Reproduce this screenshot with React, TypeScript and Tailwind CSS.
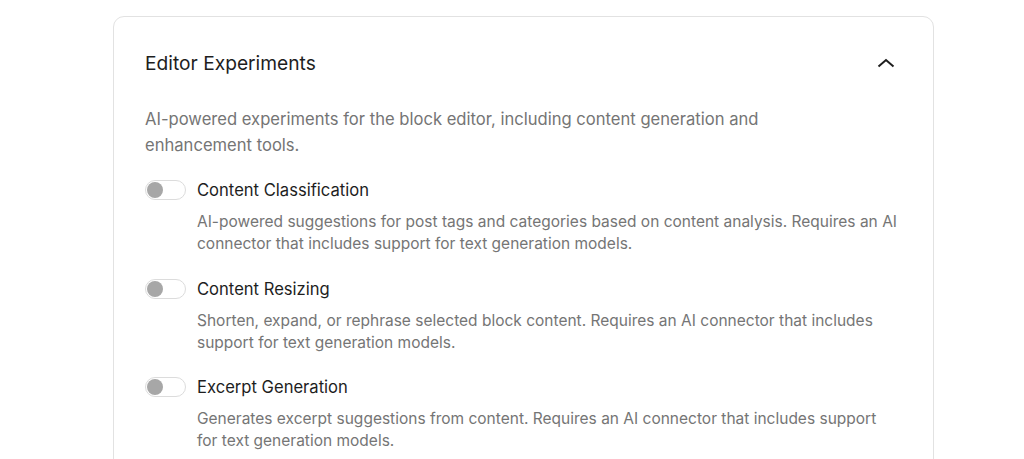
import React from "react";

const items = [
  {
    label: "Content Classification",
    desc: "AI-powered suggestions for post tags and categories based on content analysis. Requires an AI connector that includes support for text generation models.",
  },
  {
    label: "Content Resizing",
    desc: "Shorten, expand, or rephrase selected block content. Requires an AI connector that includes support for text generation models.",
  },
  {
    label: "Excerpt Generation",
    desc: "Generates excerpt suggestions from content. Requires an AI connector that includes support for text generation models.",
  },
];

function Toggle() {
  return (
    <div className="w-[41px] h-[20px] rounded-full border border-[#dcdcdc] bg-white flex items-center px-[1px] shrink-0">
      <div className="w-[16px] h-[16px] rounded-full bg-[#a7a7a7]" />
    </div>
  );
}

export default function App() {
  return (
    <div
      className="w-[1024px] h-[459px] bg-white overflow-hidden"
      style={{ fontFamily: 'Inter, "Liberation Sans", sans-serif' }}
    >
      <div className="pt-[16px] pl-[113px]">
        <div className="w-[821px] h-[480px] border border-[#e2e2e2] rounded-[11px] px-[31px] pt-[34px]">
          <div className="flex items-center justify-between h-[24px]">
            <div className="text-[19.2px] leading-[24px] text-[#1e1e1e]">
              Editor Experiments
            </div>
            <svg width="18" height="10" viewBox="0 0 18 10" className="mr-[7px]">
              <path d="M1.5 8.5 L9 2 L16.5 8.5" fill="none" stroke="#1e1e1e" strokeWidth="2" />
            </svg>
          </div>
          <div className="mt-[31px] max-w-[640px] text-[16.6px] leading-[26px] text-[#757575]">
            AI-powered experiments for the block editor, including content generation and enhancement tools.
          </div>
          <div className="mt-[20px] flex flex-col gap-[21.5px]">
            {items.map((it) => (
              <div key={it.label}>
                <div className="flex items-center gap-[11px] h-[24px]">
                  <Toggle />
                  <div className="text-[16.6px] leading-[24px] text-[#1e1e1e]">{it.label}</div>
                </div>
                <div className="mt-[9px] pl-[52px] pr-[2px] text-[15.5px] leading-[22px] text-[#757575]">
                  {it.desc}
                </div>
              </div>
            ))}
          </div>
        </div>
      </div>
    </div>
  );
}
